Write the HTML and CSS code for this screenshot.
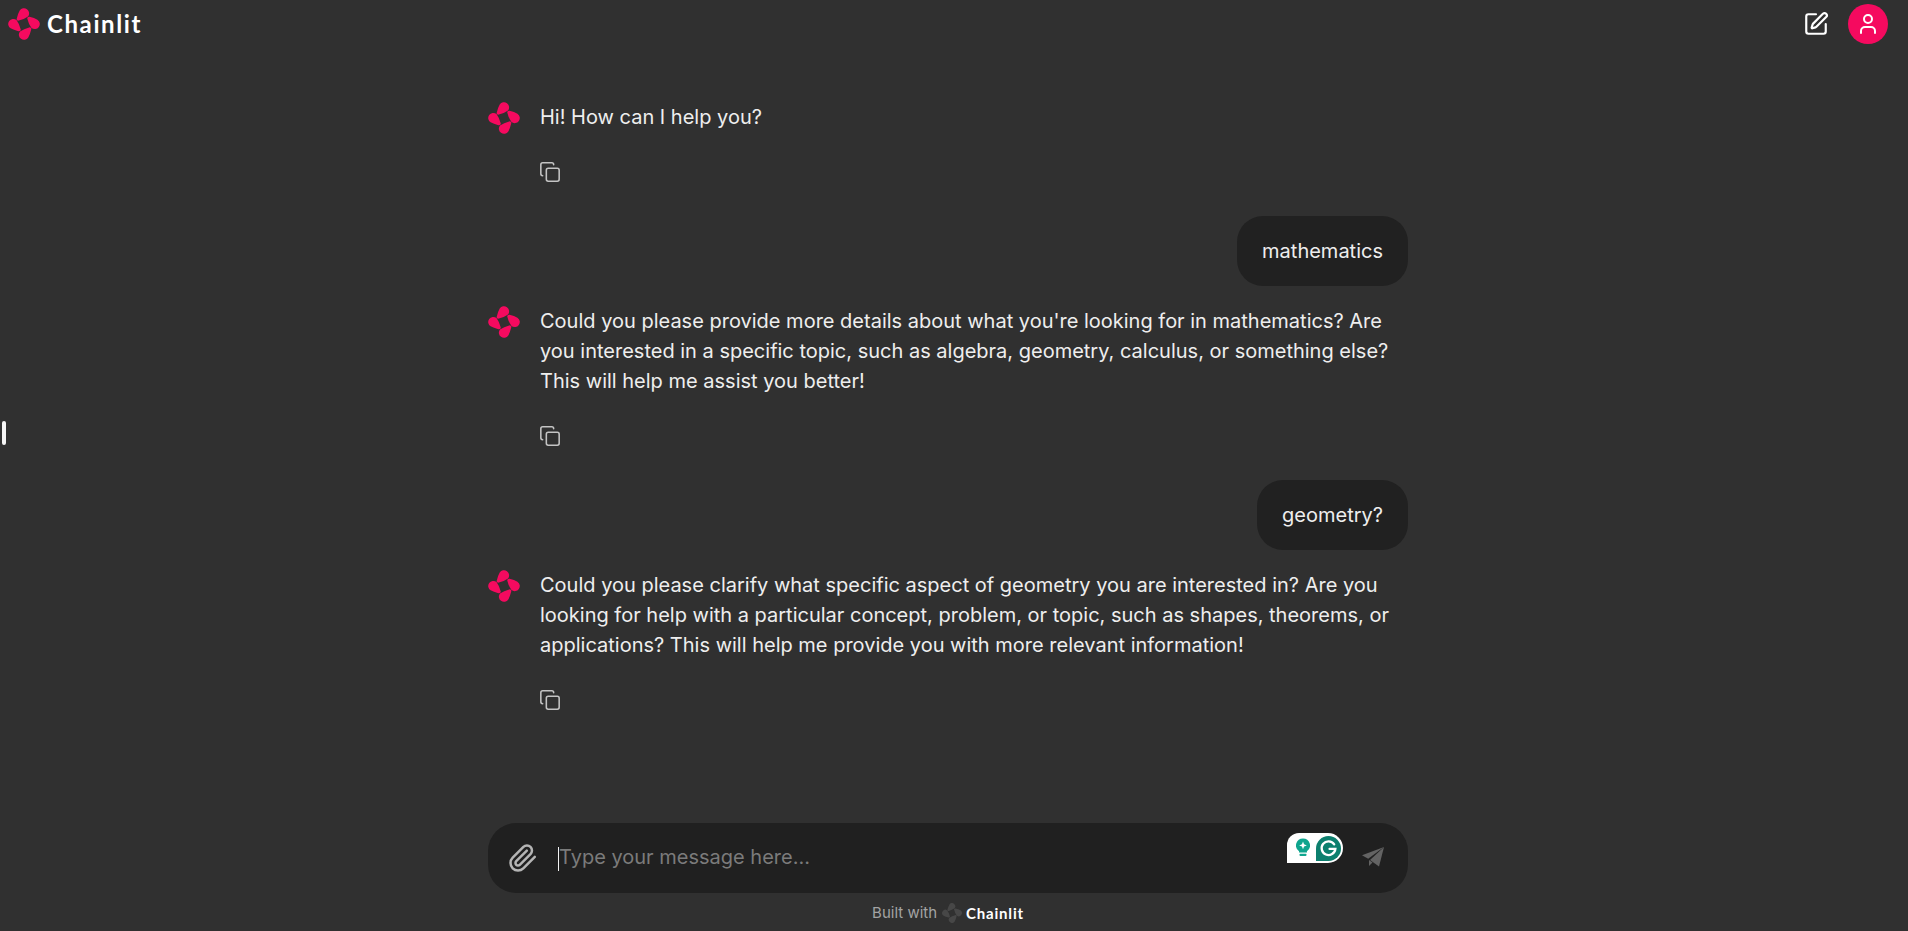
FILE: index.html
```html
<!DOCTYPE html>
<html lang="en">
	<head>
		<meta charset="utf-8">
		<title>Chainlit</title>
		<link rel="stylesheet" href="styles.css">
	</head>
	<body>
	<svg class="defs" width="0" height="0" aria-hidden="true">
		<defs>
			<g id="mark">
				<path id="drop" d="M8.800 10.500Q10 5.500 11.700 2.600A5.100 5.100 0 1 1 20 8.500Q16 11.400 10.900 12.600A1.600 1.600 0 0 1 8.800 10.500z"/>
				<use href="#drop" transform="rotate(90 16 16)"/>
				<use href="#drop" transform="rotate(180 16 16)"/>
				<use href="#drop" transform="rotate(270 16 16)"/>
			</g>
			<g id="copy">
				<rect width="14" height="14" x="8" y="8" rx="2" ry="2"/>
				<path d="M4 16c-1.1 0-2-.9-2-2V4c0-1.1.9-2 2-2h10c1.1 0 2 .9 2 2"/>
			</g>
		</defs>
	</svg>

	<div class="header">
		<div class="brand">
			<svg class="brand-mark" viewBox="0 0 32 32"><use href="#mark"/></svg>
			<span class="brand-name">Chainlit</span>
		</div>
		<div class="header-tools">
			<svg class="line-icon new-chat" viewBox="0 0 24 24">
				<path d="M12 3H5a2 2 0 0 0-2 2v14a2 2 0 0 0 2 2h14a2 2 0 0 0 2-2v-7"/>
				<path d="M18.375 2.625a1 1 0 0 1 3 3l-9.013 9.014a2 2 0 0 1-.853.505l-2.873.84a.5.5 0 0 1-.62-.62l.84-2.873a2 2 0 0 1 .506-.852z"/>
			</svg>
			<div class="account">
				<svg class="line-icon" viewBox="0 0 24 24">
					<path d="M19 21v-2a4 4 0 0 0-4-4H9a4 4 0 0 0-4 4v2"/>
					<circle cx="12" cy="7" r="4"/>
				</svg>
			</div>
		</div>
	</div>

	<div class="sidebar-handle"></div>

	<div class="main">
		<div class="thread">
			<div class="bot-message">
				<svg class="avatar" viewBox="0 0 32 32"><use href="#mark"/></svg>
				<div class="bot-body">
					<div class="bot-text">Hi! How can I help you?</div>
					<svg class="line-icon copy-icon" viewBox="0 0 24 24"><use href="#copy"/></svg>
				</div>
			</div>
			<div class="user-message"><div class="bubble">mathematics</div></div>
			<div class="bot-message">
				<svg class="avatar" viewBox="0 0 32 32"><use href="#mark"/></svg>
				<div class="bot-body">
					<div class="bot-text">Could you please provide more details about what you're looking for in mathematics? Are you interested in a specific topic, such as algebra, geometry, calculus, or something else? This will help me assist you better!</div>
					<svg class="line-icon copy-icon" viewBox="0 0 24 24"><use href="#copy"/></svg>
				</div>
			</div>
			<div class="user-message"><div class="bubble">geometry?</div></div>
			<div class="bot-message">
				<svg class="avatar" viewBox="0 0 32 32"><use href="#mark"/></svg>
				<div class="bot-body">
					<div class="bot-text">Could you please clarify what specific aspect of geometry you are interested in? Are you looking for help with a particular concept, problem, or topic, such as shapes, theorems, or applications? This will help me provide you with more relevant information!</div>
					<svg class="line-icon copy-icon" viewBox="0 0 24 24"><use href="#copy"/></svg>
				</div>
			</div>
		</div>

		<div class="composer">
			<svg class="line-icon attach" viewBox="0 0 24 24">
				<path d="m21.44 11.05-9.19 9.19a6 6 0 0 1-8.49-8.49l8.57-8.57A4 4 0 1 1 18 8.84l-8.59 8.57a2 2 0 0 1-2.83-2.83l8.49-8.48"/>
			</svg>
			<div class="composer-input"><span class="caret"></span>Type your message here...</div>
			<div class="grammarly">
				<svg class="grammarly-bulb" viewBox="0 0 16 22">
					<path d="M8 0a8 8 0 0 1 4.500 14.600V16h-9v-1.400A8 8 0 0 1 8 0z"/>
					<rect x="4" y="17.500" width="8" height="2.500" rx="1"/>
					<path class="spark" d="M8 3.600l1.200 3.200 3.200 1.200-3.200 1.200L8 12.400 6.800 9.200 3.600 8l3.200-1.200z"/>
				</svg>
				<svg class="grammarly-g" viewBox="0 0 24 24">
					<path class="g-back" d="M12 0a12 12 0 0 1 0 24H0V12A12 12 0 0 1 12 0z"/>
					<path class="g-letter" d="M17.500 8a6.600 6.600 0 1 0 1.100 4.400h-5.600"/>
				</svg>
			</div>
			<svg class="send" viewBox="0 0 24 24">
				<path d="M23 1 1 9.300l6.200 3.400z"/>
				<path d="M23 1 9 14l9 6.500z"/>
				<path d="M8 14v6l3.500-3.600z"/>
			</svg>
		</div>

		<div class="footer">
			<span>Built with</span>
			<svg class="footer-mark" viewBox="0 0 32 32"><use href="#mark"/></svg>
			<span class="footer-name">Chainlit</span>
		</div>
	</div>
	</body>
</html>
```

FILE: styles.css
```css
html, body
{
	height: 100%;
}

body
{
	margin: 0;
	display: flex;
	flex-direction: column;
	overflow: hidden;
	background: #303030;
	color: #eeeeee;
	font: 20px/30px Inter, "Noto Sans", sans-serif;
}

.defs
{
	position: absolute;
}

.line-icon
{
	fill: none;
	stroke: currentColor;
	stroke-width: 2;
	stroke-linecap: round;
	stroke-linejoin: round;
}

.header
{
	display: flex;
	justify-content: space-between;
	align-items: center;
	height: 48px;
	padding: 0 20px 0 8px;
	flex: none;
}

.brand
{
	display: flex;
	align-items: center;
	gap: 7px;
}

.brand-mark
{
	width: 32px;
	height: 32px;
	fill: #f50a5f;
}

.brand-name
{
	font: 700 24px/32px Lato, sans-serif;
	letter-spacing: 1.6px;
	color: #fff;
}

.header-tools
{
	display: flex;
	align-items: center;
	gap: 19px;
}

.new-chat
{
	width: 26px;
	height: 26px;
	color: #fff;
}

.account
{
	display: flex;
	align-items: center;
	justify-content: center;
	width: 40px;
	height: 40px;
	border-radius: 50%;
	background: #f50a5f;
	color: #fff;
}

.account svg
{
	width: 24px;
	height: 24px;
}

.sidebar-handle
{
	position: absolute;
	left: 2px;
	top: 421px;
	width: 4px;
	height: 24px;
	border-radius: 2px;
	background: #f5f5f5;
}

.main
{
	flex: 1;
	display: flex;
	flex-direction: column;
	align-items: center;
	padding-right: 12px;
	min-height: 0;
}

.thread
{
	flex: 1;
	width: 920px;
	padding-top: 54px;
}

.bot-message
{
	display: flex;
	gap: 20px;
}

.avatar
{
	flex: none;
	width: 32px;
	height: 32px;
	fill: #f50a5f;
}

.bot-body
{
	flex: 1;
}

.copy-icon
{
	display: block;
	width: 22px;
	height: 22px;
	margin: 29px 0 33px -1px;
	color: #c4c4c4;
	stroke-width: 1.7;
}

.user-message
{
	display: flex;
	justify-content: flex-end;
	margin-bottom: 20px;
}

.bubble
{
	padding: 20px 25px;
	border-radius: 26px;
	background: #212121;
}

.composer
{
	position: relative;
	display: flex;
	align-items: center;
	flex: none;
	width: 920px;
	height: 70px;
	box-sizing: border-box;
	padding: 0 23px 0 20px;
	border-radius: 28px;
	background: #202020;
}

.attach
{
	width: 30px;
	height: 30px;
	color: #b4b4b4;
}

.composer-input
{
	position: relative;
	flex: 1;
	margin: -2px 0 0 20px;
	color: #7b7b7b;
}

.caret
{
	display: inline-block;
	width: 1px;
	height: 24px;
	vertical-align: -7px;
	background: #f2f2f2;
}

.grammarly
{
	position: absolute;
	left: 799px;
	top: 10px;
	display: flex;
	align-items: center;
	justify-content: space-between;
	width: 56px;
	height: 30px;
	box-sizing: border-box;
	padding: 0 2px 0 9px;
	border-radius: 12px 15px 15px 0;
	background: #fff;
}

.grammarly-bulb
{
	width: 14px;
	height: 20px;
	fill: #0fa58e;
}

.spark
{
	fill: #fff;
}

.grammarly-g
{
	width: 25px;
	height: 25px;
}

.g-back
{
	fill: #0c7f6e;
}

.g-letter
{
	fill: none;
	stroke: #fff;
	stroke-width: 2.2;
	stroke-linecap: round;
}

.send
{
	width: 24px;
	height: 24px;
	fill: #636363;
}

.footer
{
	display: flex;
	align-items: center;
	justify-content: center;
	flex: none;
	height: 38px;
	box-sizing: border-box;
	padding-top: 2px;
	font-size: 15px;
	color: #a3a3a3;
}

.footer-mark
{
	width: 20px;
	height: 20px;
	margin: 0 4px 0 5px;
	fill: #474747;
}

.footer-name
{
	font: 700 15px/20px Lato, sans-serif;
	letter-spacing: 0.8px;
	color: #fff;
}
```
